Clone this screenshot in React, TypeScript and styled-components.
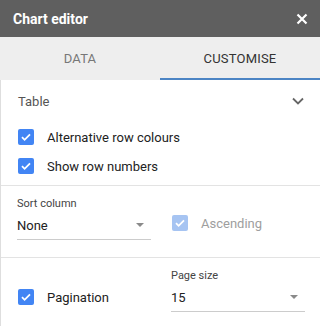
import React from "react";
import styled, { createGlobalStyle } from "styled-components";

const Global = createGlobalStyle`
  html, body { margin: 0; padding: 0; background: #fff; }
  body { font-family: Roboto, "Liberation Sans", Arial, sans-serif; }
`;

const Panel = styled.div`
  width: 320px;
  height: 326px;
  display: flex;
  flex-direction: column;
  overflow: hidden;
`;

const Header = styled.div`
  flex: none;
  height: 37px;
  background: #5f5f5f;
  display: flex;
  align-items: center;
  padding: 0 11px 0 13px;
  color: #fff;
`;

const Title = styled.div`
  font-size: 14px;
  font-weight: 700;
  flex: 1;
`;

const Close = styled.button`
  border: 0;
  background: none;
  padding: 0;
  width: 14px;
  height: 14px;
  display: flex;
  align-items: center;
  justify-content: center;
`;

const Tabs = styled.div`
  flex: none;
  height: 43px;
  background: #eeeeee;
  display: flex;
`;

const Tab = styled.div<{ $active?: boolean }>`
  flex: 1;
  display: flex;
  align-items: center;
  justify-content: center;
  font-size: 13px;
  letter-spacing: 0.2px;
  color: ${(p) => (p.$active ? "#333" : "#777")};
  box-sizing: border-box;
  padding-top: 2px;
  border-bottom: 2px solid ${(p) => (p.$active ? "#4c84c4" : "transparent")};
`;

const Body = styled.div`
  flex: 1;
  border-left: 1px solid #dedede;
  display: flex;
  flex-direction: column;
`;

const Section = styled.div<{ $pad: string }>`
  flex: none;
  padding: ${(p) => p.$pad};
  border-bottom: 1px solid #e3e3e3;
`;

const SectionHead = styled.div`
  display: flex;
  align-items: center;
  justify-content: space-between;
  height: 30px;
  padding-right: 16px;
  margin-bottom: 13px;
`;

const SectionTitle = styled.div`
  font-size: 13px;
  color: #555;
`;

const CheckRow = styled.label<{ $disabled?: boolean }>`
  display: flex;
  align-items: center;
  gap: 13px;
  height: 16px;
  font-size: 13px;
  color: ${(p) => (p.$disabled ? "#9e9e9e" : "#222")};
  & + & { margin-top: 13px; }
`;

const Box = styled.span<{ $disabled?: boolean }>`
  width: 16px;
  height: 16px;
  border-radius: 2px;
  background: ${(p) => (p.$disabled ? "#a6c4f2" : "#4285f4")};
  display: flex;
  align-items: center;
  justify-content: center;
  flex: none;
`;

const Row = styled.div`
  display: flex;
  align-items: flex-end;
`;

const Field = styled.div<{ $w: number }>`
  width: ${(p) => p.$w}px;
  display: flex;
  flex-direction: column;
`;

const Side = styled.div<{ $w?: number; $ml?: number; $mb: number }>`
  width: ${(p) => (p.$w ? `${p.$w}px` : "auto")};
  margin-left: ${(p) => p.$ml ?? 0}px;
  margin-bottom: ${(p) => p.$mb}px;
`;

const FieldLabel = styled.div`
  font-size: 11px;
  line-height: 14px;
  color: #444;
  height: 14px;
`;

const Select = styled.div`
  height: 28px;
  border-bottom: 1px solid #ccc;
  display: flex;
  align-items: center;
  justify-content: space-between;
  font-size: 13px;
  color: #222;
  padding-right: 7px;
`;

const Caret = styled.span`
  width: 0;
  height: 0;
  border-left: 4px solid transparent;
  border-right: 4px solid transparent;
  border-top: 4px solid #8a8a8a;
`;

const Check = () => (
  <svg width="12" height="12" viewBox="0 0 12 12">
    <path d="M2 6.2l2.6 2.6L10 3.4" fill="none" stroke="#fff" strokeWidth="1.8" />
  </svg>
);

function Checkbox({ label, disabled }: { label: string; disabled?: boolean }) {
  return (
    <CheckRow $disabled={disabled}>
      <Box $disabled={disabled}>
        <Check />
      </Box>
      {label}
    </CheckRow>
  );
}

export default function App() {
  return (
    <Panel>
      <Global />
      <Header>
        <Title>Chart editor</Title>
        <Close>
          <svg width="12" height="12" viewBox="0 0 12 12">
            <path d="M1.5 1.5l9 9M10.5 1.5l-9 9" stroke="#fff" strokeWidth="2.2" />
          </svg>
        </Close>
      </Header>
      <Tabs>
        <Tab>DATA</Tab>
        <Tab $active>CUSTOMISE</Tab>
      </Tabs>
      <Body>
        <Section $pad="6px 0 11px 17px">
          <SectionHead>
            <SectionTitle>Table</SectionTitle>
            <svg width="12" height="8" viewBox="0 0 12 8">
              <path d="M1 1.5l5 5 5-5" fill="none" stroke="#666" strokeWidth="1.8" />
            </svg>
          </SectionHead>
          <Checkbox label="Alternative row colours" />
          <Checkbox label="Show row numbers" />
        </Section>
        <Section $pad="11px 0 17px 16px">
          <Row>
            <Field $w={134}>
              <FieldLabel>Sort column</FieldLabel>
              <Select>
                None
                <Caret />
              </Select>
            </Field>
            <Side $ml={21} $mb={9}>
              <Checkbox label="Ascending" disabled />
            </Side>
          </Row>
        </Section>
        <Section $pad="11px 0 14px 17px">
          <Row>
            <Side $w={153} $mb={7}>
              <Checkbox label="Pagination" />
            </Side>
            <Field $w={134}>
              <FieldLabel>Page size</FieldLabel>
              <Select>
                15
                <Caret />
              </Select>
            </Field>
          </Row>
        </Section>
      </Body>
    </Panel>
  );
}
